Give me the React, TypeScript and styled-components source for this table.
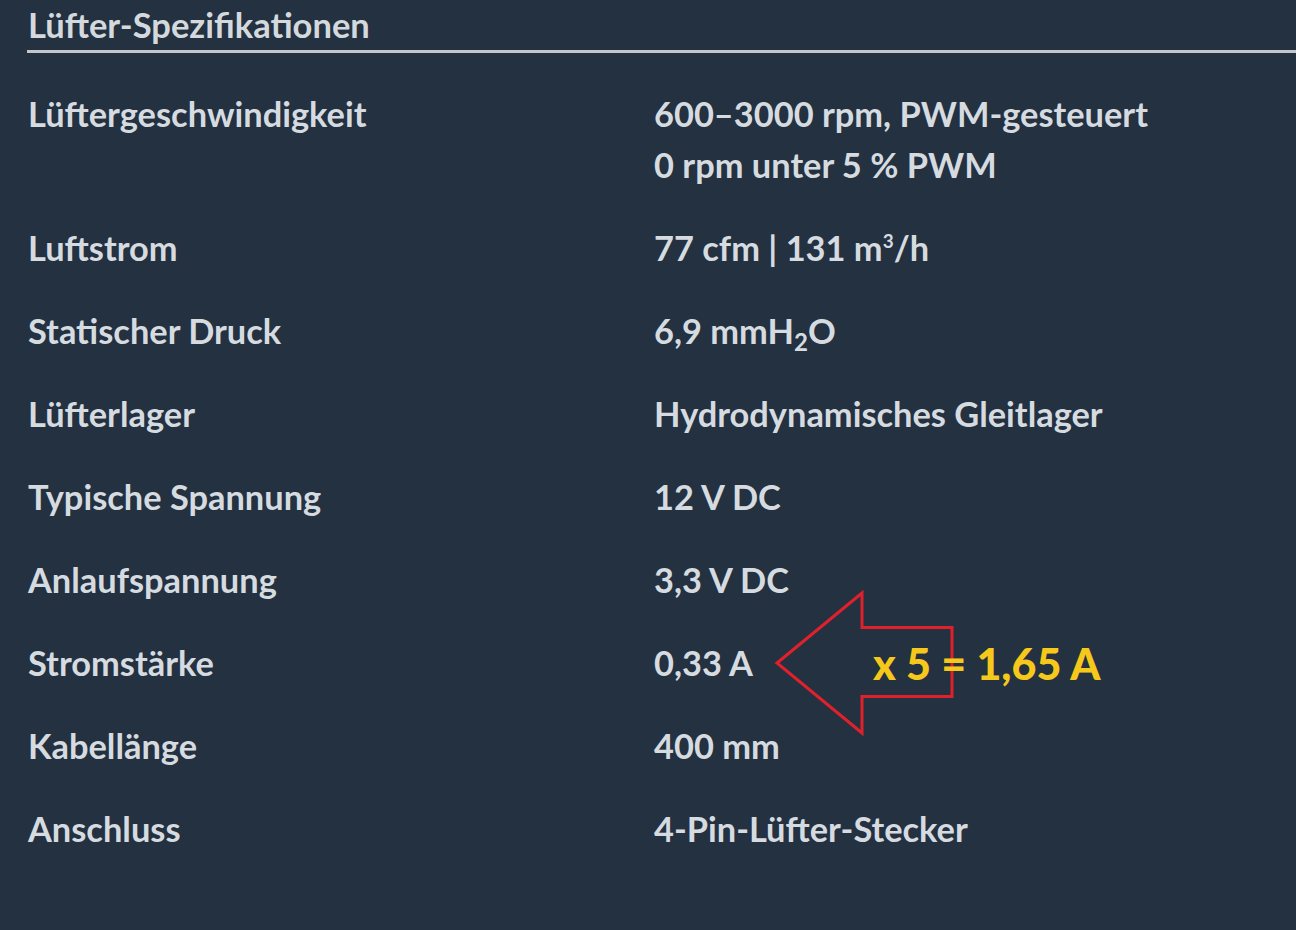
import React from "react";
import styled, { createGlobalStyle } from "styled-components";

const Global = createGlobalStyle`
  html, body { margin: 0; padding: 0; background: #233140; }
  body { font-family: Lato, "Open Sans", sans-serif; }
`;

const Page = styled.div`
  width: 1296px;
  height: 930px;
  background: #233140;
  padding-left: 27px;
  box-sizing: border-box;
  overflow: hidden;
`;

const Heading = styled.h2`
  margin: 0;
  padding: 5px 0 0 1px;
  box-sizing: content-box;
  height: 45px;
  border-bottom: 3px solid #c3c7cb;
  font-family: Lato, sans-serif;
  font-weight: 700;
  font-size: 34.5px;
  line-height: 40px;
  color: #d4d9de;
`;

const Table = styled.div`
  display: grid;
  grid-template-columns: 626px 1fr;
  padding-top: 19px;
  padding-left: 1px;
`;

const Cell = styled.div`
  padding: 16px 0;
  font-family: Lato, sans-serif;
  font-weight: 700;
  font-size: 34.4px;
  line-height: 51px;
  color: #d6dbe0;
  position: relative;
  white-space: nowrap;
`;

const Sub = styled.sub`
  font-size: 0.7em;
  line-height: 0;
  vertical-align: -0.3em;
`;

const Sup = styled.sup`
  font-size: 0.55em;
  line-height: 0;
  vertical-align: 0.7em;
`;

const ArrowSvg = styled.svg`
  position: absolute;
  left: 121px;
  top: 50%;
  transform: translateY(-50%);
  overflow: visible;
`;

const Note = styled.span`
  position: absolute;
  left: 219px;
  top: 50%;
  transform: translateY(-50%);
  font-family: Lato, sans-serif;
  font-weight: 900;
  font-size: 43px;
  line-height: 1;
  color: #f7c81c;
  white-space: nowrap;
`;

const rows: { label: string; value: React.ReactNode; arrow?: boolean }[] = [
  {
    label: "Lüftergeschwindigkeit",
    value: (
      <>
        600–3000 rpm, PWM-gesteuert
        <br />0 rpm unter 5 % PWM
      </>
    ),
  },
  {
    label: "Luftstrom",
    value: (
      <>
        77 cfm | 131 m<Sup>3</Sup>/h
      </>
    ),
  },
  {
    label: "Statischer Druck",
    value: (
      <>
        6,9 mmH<Sub>2</Sub>O
      </>
    ),
  },
  { label: "Lüfterlager", value: "Hydrodynamisches Gleitlager" },
  { label: "Typische Spannung", value: "12 V DC" },
  { label: "Anlaufspannung", value: "3,3 V DC" },
  { label: "Stromstärke", value: "0,33 A", arrow: true },
  { label: "Kabellänge", value: "400 mm" },
  { label: "Anschluss", value: "4-Pin-Lüfter-Stecker" },
];

export default function App() {
  return (
    <Page>
      <Global />
      <Heading>Lüfter-Spezifikationen</Heading>
      <Table>
        {rows.map((r) => (
          <React.Fragment key={r.label}>
            <Cell>{r.label}</Cell>
            <Cell>
              {r.value}
              {r.arrow && (
                <>
                  <ArrowSvg width="180" height="144" viewBox="0 0 180 144">
                    <polygon
                      points="2,72 87,2 87,36.5 177,36.5 177,105.5 87,105.5 87,142"
                      fill="none"
                      stroke="#e0212b"
                      strokeWidth="3"
                      strokeLinejoin="miter"
                    />
                  </ArrowSvg>
                  <Note>x 5 = 1,65 A</Note>
                </>
              )}
            </Cell>
          </React.Fragment>
        ))}
      </Table>
    </Page>
  );
}
